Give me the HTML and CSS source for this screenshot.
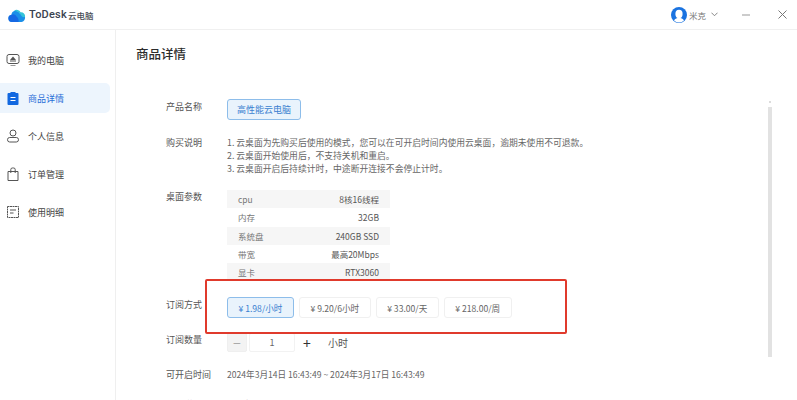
FILE: index.html
```html
<!DOCTYPE html>
<html lang="zh">
<head>
<meta charset="utf-8">
<title>ToDesk云电脑</title>
<link rel="stylesheet" href="styles.css">
</head>
<body>
<div class="app">
  <header class="topbar">
    <div class="brand">
      <svg class="logo" viewBox="0 0 18 14" width="18" height="14"><path fill="#1b8fe8" d="M4 14a3.600 3.600 0 0 1-.6-7.150A4.500 4.500 0 0 1 12 5.500a4 4 0 0 1 1.500 8.500z"/><path fill="#1668e3" d="M4 14a3.600 3.600 0 0 1-.8-7.100A3.500 3.500 0 0 1 8.500 8.500c1.500 1 2.500 3 2 5.500z"/><path fill="#35c3d8" d="M6 2.800A4.300 4.300 0 0 1 12.600 4.300 4 4 0 0 1 17 9c-2 .5-3.500-.5-4.500-2.500C11.500 4.500 9 3 6 2.800z"/></svg>
      <span class="brand-name">ToDesk</span><span class="brand-sub">云电脑</span>
    </div>
    <div class="top-actions">
      <svg class="avatar" viewBox="0 0 16 16" width="16" height="16"><circle cx="8" cy="8" r="8" fill="#1a73e0"/><ellipse cx="8" cy="7" rx="3.600" ry="4.200" fill="#fff"/><path fill="#fff" d="M3 13.500c1-2 3-2.500 5-2.500s4 .5 5 2.500a7 7 0 0 1-10 0z"/></svg>
      <span class="user">米克</span>
      <svg class="chev" viewBox="0 0 8 5" width="7" height="4.500"><path d="M.5.700 4 4.200 7.500.700" fill="none" stroke="#777" stroke-width="1"/></svg>
      <svg class="win-min" viewBox="0 0 8 2" width="8" height="2"><path d="M0 1h8" stroke="#999" stroke-width="1"/></svg>
      <svg class="win-close" viewBox="0 0 9 9" width="9" height="9"><path d="M.5.500l8 8M8.500.500l-8 8" stroke="#777" stroke-width="1"/></svg>
    </div>
  </header>
  <div class="body">
    <nav class="sidebar">
      <a class="nav-item">
        <svg viewBox="0 0 14 14" width="14" height="14"><rect x="1" y="1.500" width="12" height="9" rx="2" fill="none" stroke="#555" stroke-width="1"/><path fill="#555" d="M7 3.500 10 7H4z"/><rect x="4" y="7.500" width="6" height="1" fill="#555"/><rect x="4.500" y="12" width="5" height="1" fill="#999"/></svg>
        <span>我的电脑</span>
      </a>
      <a class="nav-item active">
        <svg viewBox="0 0 14 14" width="14" height="14"><path fill="#1268e0" d="M2.500 2H4.500V1H9.500V2H11.500A1 1 0 0 1 12.500 3V13A1 1 0 0 1 11.500 14H2.500A1 1 0 0 1 1.500 13V3A1 1 0 0 1 2.500 2z"/><path d="M4.500 6.500h5M4.500 9.500h5" stroke="#fff" stroke-width="1.200"/></svg>
        <span>商品详情</span>
      </a>
      <a class="nav-item">
        <svg viewBox="0 0 14 14" width="14" height="14"><circle cx="7" cy="4" r="3" fill="none" stroke="#555" stroke-width="1"/><rect x="1.500" y="8.500" width="11" height="4.500" rx="2.200" fill="none" stroke="#555" stroke-width="1"/></svg>
        <span>个人信息</span>
      </a>
      <a class="nav-item">
        <svg viewBox="0 0 14 14" width="14" height="14"><path d="M2 4.500h10v9H2zM4.800 6V2.500A1.500 1.500 0 0 1 6.300 1h1.400a1.500 1.500 0 0 1 1.500 1.500V6" fill="none" stroke="#555" stroke-width="1"/></svg>
        <span>订单管理</span>
      </a>
      <a class="nav-item">
        <svg viewBox="0 0 14 14" width="14" height="14"><rect x="1.500" y="1.500" width="11" height="11" fill="none" stroke="#555" stroke-width="1" stroke-dasharray="2 .5"/><path d="M4 5h6M4 8h3.500" stroke="#555" stroke-width="1"/></svg>
        <span>使用明细</span>
      </a>
    </nav>
    <main class="main">
      <h1 class="title">商品详情</h1>
      <div class="row row-name">
        <div class="label">产品名称</div>
        <div class="product-chip">高性能云电脑</div>
      </div>
      <div class="row row-desc">
        <div class="label">购买说明</div>
        <ol class="notes">
          <li>1. 云桌面为先购买后使用的模式，您可以在可开启时间内使用云桌面，逾期未使用不可退款。</li>
          <li>2. 云桌面开始使用后，不支持关机和重启。</li>
          <li>3. 云桌面开启后持续计时，中途断开连接不会停止计时。</li>
        </ol>
      </div>
      <div class="row row-spec">
        <div class="label">桌面参数</div>
        <div class="spec">
          <div class="spec-row"><span>cpu</span><b>8核16线程</b></div>
          <div class="spec-row"><span>内存</span><b>32GB</b></div>
          <div class="spec-row"><span>系统盘</span><b>240GB SSD</b></div>
          <div class="spec-row"><span>带宽</span><b>最高20Mbps</b></div>
          <div class="spec-row"><span>显卡</span><b>RTX3060</b></div>
        </div>
      </div>
      <div class="row row-plan">
        <div class="label">订阅方式</div>
        <div class="plans">
          <div class="plan selected">¥ 1.98/小时</div>
          <div class="plan">¥ 9.20/6小时</div>
          <div class="plan">¥ 33.00/天</div>
          <div class="plan">¥ 218.00/周</div>
        </div>
      </div>
      <div class="row row-qty">
        <div class="label">订阅数量</div>
        <div class="stepper">
          <div class="step minus">−</div>
          <div class="qty">1</div>
          <div class="step plus">+</div>
          <div class="unit">小时</div>
        </div>
      </div>
      <div class="row row-time">
        <div class="label">可开启时间</div>
        <div class="time">2024年3月14日 16:43:49 ~ 2024年3月17日 16:43:49</div>
      </div>
      <div class="row row-last">
        <div class="label">退订说明</div>
        <div class="time">1小时</div>
      </div>
      <div class="highlight"></div>
      <div class="scroll-nub"></div>
      <div class="scrollbar"></div>
    </main>
  </div>
</div>
</body>
</html>
```
FILE: styles.css
```css
* { box-sizing: border-box; }
html, body { margin: 0; height: 100%; }
body { background: #fff; font-family: "Noto Sans CJK SC", "Noto Sans", sans-serif; color: #555; overflow: hidden; }
.app { width: 797px; height: 400px; display: flex; flex-direction: column; overflow: hidden; }

.topbar { height: 30px; flex: none; display: flex; align-items: center; justify-content: space-between; border-bottom: 1px solid #f0f0f0; padding: 0 10px 0 8px; }
.brand { display: flex; align-items: center; }
.logo { margin-right: 3px; }
.brand-name { font: 500 11px "Roboto", sans-serif; letter-spacing: .2px; color: #3b4350; margin-right: 1px; }
.brand-sub { font-size: 8.500px; color: #4a4f58; font-weight: 500; }
.top-actions { display: flex; align-items: center; }
.user { font-size: 8.500px; color: #777; margin: 0 5px 0 2px; }
.chev { margin-right: 24px; }
.win-min { margin-right: 28px; }

.body { flex: 1; display: flex; min-height: 0; }
.sidebar { width: 116px; flex: none; border-right: 1px solid #efefef; padding: 15px 5px 0 0; display: flex; flex-direction: column; gap: 8px; }
.nav-item { height: 30px; display: flex; align-items: center; gap: 8px; padding-left: 6px; font-size: 9px; color: #444; border-radius: 0 5px 5px 0; }
.nav-item.active { background: #edf5fd; color: #2a6fd8; }

.main { flex: 1; position: relative; padding: 15px 0 0 20px; min-width: 0; overflow: hidden; }
.title { margin: 0 0 37px; font-size: 12.500px; line-height: 18px; font-weight: 500; color: #2c2c2c; }
.row { display: flex; }
.label { width: 91px; flex: none; padding-left: 30px; font-size: 9px; line-height: 13px; color: #555; }
.row-name { height: 36px; align-items: flex-start; }
.product-chip { width: 74px; height: 21px; margin-top: -1px; border: 1px solid #8dbdea; border-radius: 3px; background: #e9f3fc; color: #3a7fd0; font-size: 9px; display: flex; align-items: center; justify-content: center; }
.row-desc { height: 54px; }
.notes { list-style: none; margin: 0; padding: 0; font-size: 8.800px; line-height: 13px; color: #666; }
.row-spec { height: 96px; }
.spec { width: 163px; height: 92px; flex: none; font-size: 8.500px; color: #777; overflow: hidden; }
.spec-row { height: 18.300px; display: flex; align-items: center; justify-content: space-between; padding: 0 11px; }
.spec-row:nth-child(odd) { background: #f6f6f6; }
.spec-row b { font-weight: 400; color: #555; }
.row-plan { height: 35px; padding-top: 12px; }
.plans { display: flex; gap: 5px; margin-top: -1px; align-items: flex-start; }
.plan { height: 21px; padding: 0 10.500px; border: 1px solid #f0f0f0; border-radius: 3px; font-size: 8.600px; color: #666; display: flex; align-items: center; white-space: nowrap; }
.plan.selected { background: #e9f3fc; border-color: #8dbdea; color: #3a7fd0; }
.row-qty { height: 35px; padding-top: 12px; }
.stepper { display: flex; align-items: center; height: 19px; margin-top: 0; }
.step { width: 20px; height: 19px; display: flex; align-items: center; justify-content: center; font-size: 14px; color: #333; }
.minus { background: #f3f3f3; color: #aaa; border: 1px solid #efefef; border-radius: 2px; }
.qty { width: 46px; height: 19px; margin: 0 2px; border: 1px solid #f2f2f2; border-radius: 2px; display: flex; align-items: center; justify-content: center; font-size: 9px; color: #666; }
.plus { margin-right: 11px; }
.unit { font-size: 10px; color: #555; }
.row-time { height: 35px; padding-top: 12px; }
.row-last { padding-top: 7px; }
.time { font-size: 8.600px; line-height: 13px; color: #666; }
.highlight { position: absolute; left: 89px; top: 249px; width: 362px; height: 55px; border: 2px solid #e03a2c; border-radius: 2px; }
.scroll-nub { position: absolute; left: 653px; top: 71px; width: 2px; height: 2px; background: #dcdcdc; }
.scrollbar { position: absolute; left: 652px; top: 77px; width: 4px; height: 250px; background: #e2e2e2; }
```
